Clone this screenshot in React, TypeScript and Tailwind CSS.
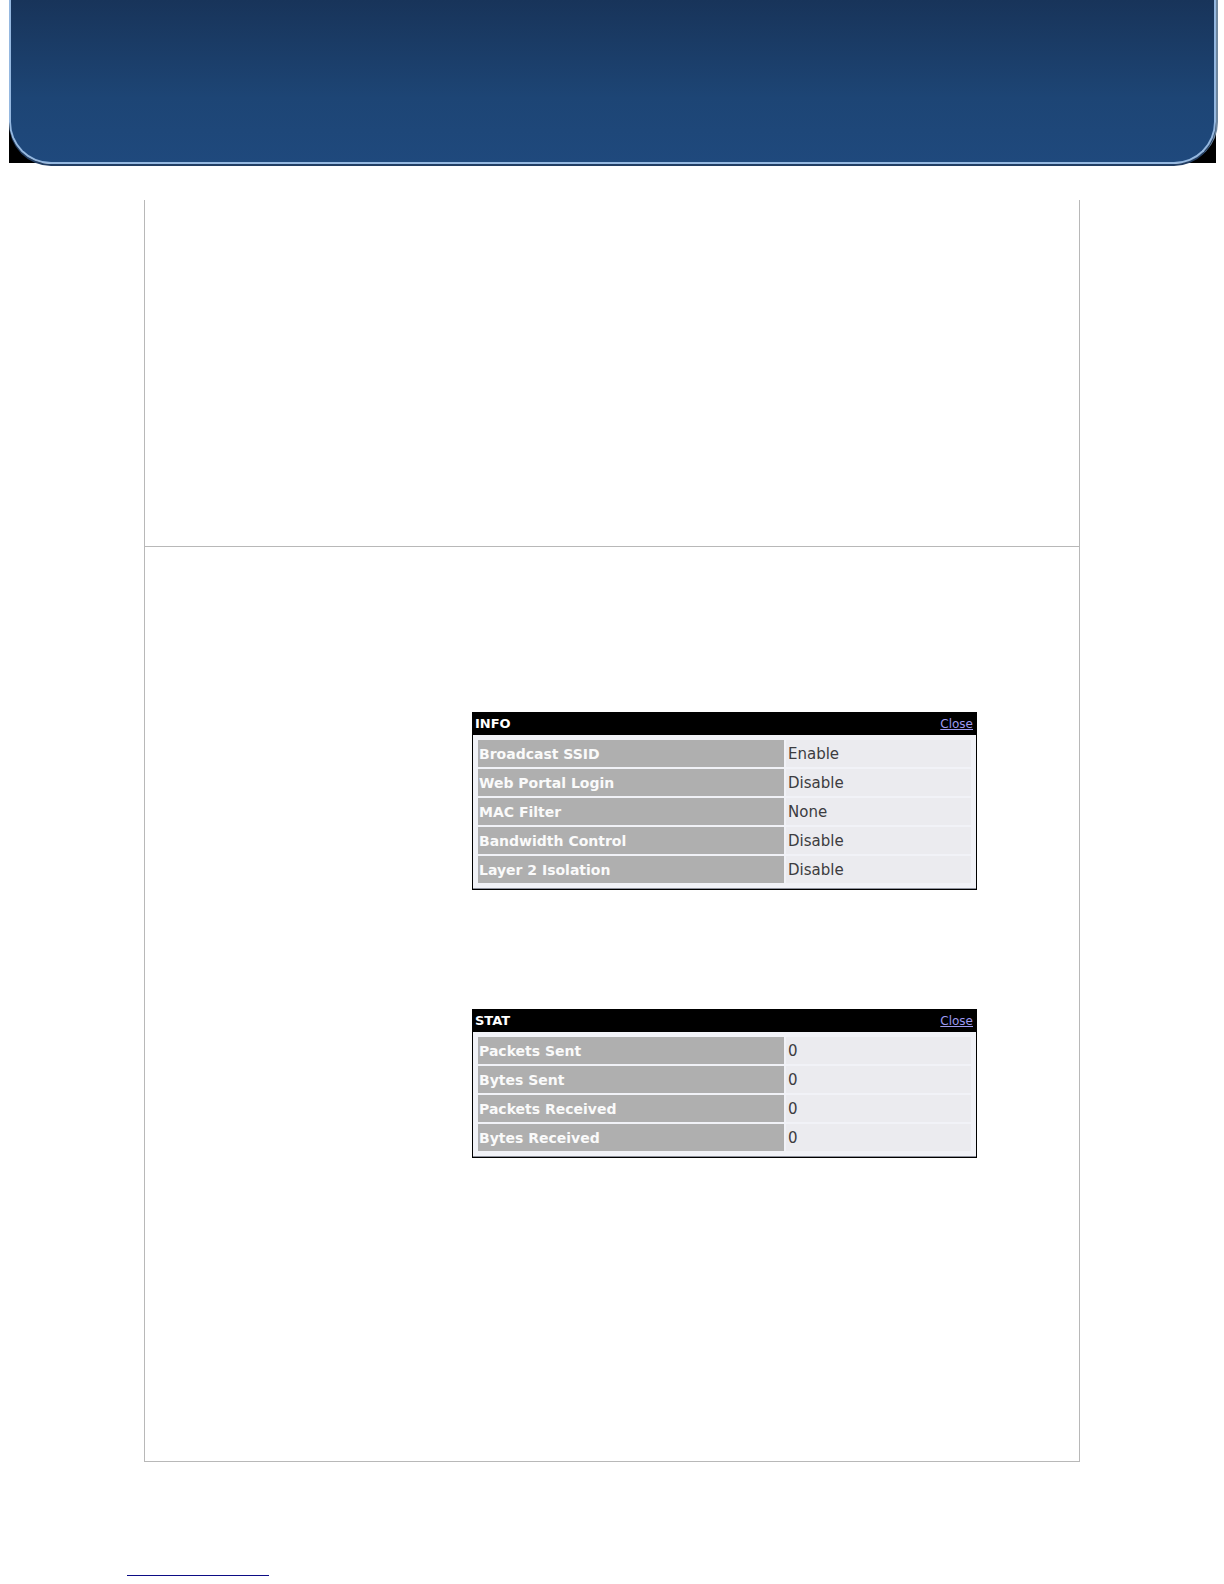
type Row = { label: string; value: string };

const info: Row[] = [
  { label: "Broadcast SSID", value: "Enable" },
  { label: "Web Portal Login", value: "Disable" },
  { label: "MAC Filter", value: "None" },
  { label: "Bandwidth Control", value: "Disable" },
  { label: "Layer 2 Isolation", value: "Disable" },
];

const stat: Row[] = [
  { label: "Packets Sent", value: "0" },
  { label: "Bytes Sent", value: "0" },
  { label: "Packets Received", value: "0" },
  { label: "Bytes Received", value: "0" },
];

function Panel({ title, rows }: { title: string; rows: Row[] }) {
  return (
    <section className="border border-black bg-[#f1f2f7]">
      <header className="flex h-[22px] items-center justify-between bg-black pr-[3px] pl-[2px] leading-5">
        <h2 className="text-[13px] font-bold text-white">{title}</h2>
        <a href="#" className="text-xs text-[#9d9af0] underline">
          Close
        </a>
      </header>
      <div className="border-b border-[#8e919c] p-[3px]">
        <table className="w-full table-fixed border-separate border-spacing-[2px]">
          <colgroup>
            <col className="w-[306px]" />
            <col />
          </colgroup>
          <tbody>
            {rows.map((row) => (
              <tr key={row.label} className="h-[27px]">
                <th
                  scope="row"
                  className="bg-[#afafaf] px-px py-0 text-left align-middle text-sm leading-5 font-bold text-[#fafafa]"
                >
                  {row.label}
                </th>
                <td className="bg-[#ebebef] px-[2px] py-0 align-middle text-[15px] leading-5 text-[#3c3c40]">
                  {row.value}
                </td>
              </tr>
            ))}
          </tbody>
        </table>
      </div>
    </section>
  );
}

export default function App() {
  return (
    <div className="bg-white font-['DejaVu_Sans',Verdana,sans-serif]">
      <div className="mr-2 ml-[9px] h-[163px] bg-black">
        <header className="h-[164px] rounded-b-[42px] border-x-2 border-b-2 border-[#95b8e0] bg-linear-to-b from-[#18345a] via-[#1d4575] via-60% to-[#1f497d] bg-origin-border shadow-[0_2px_0_#213d63,2px_0_0_#6f879f]" />
      </div>
      <main className="mx-36 mt-[37px] border-x border-b border-[#b8b8b8]">
        <div className="h-[346px]" />
        <div className="flex flex-col gap-[119px] border-t border-[#b8b8b8] pt-[165px] pr-[102px] pb-[303px] pl-[327px]">
          <Panel title="INFO" rows={info} />
          <Panel title="STAT" rows={stat} />
        </div>
      </main>
      <footer className="px-[127px] pt-[113px] pb-2">
        <hr className="h-px w-[142px] border-0 bg-[#0c0c85]" />
      </footer>
    </div>
  );
}
